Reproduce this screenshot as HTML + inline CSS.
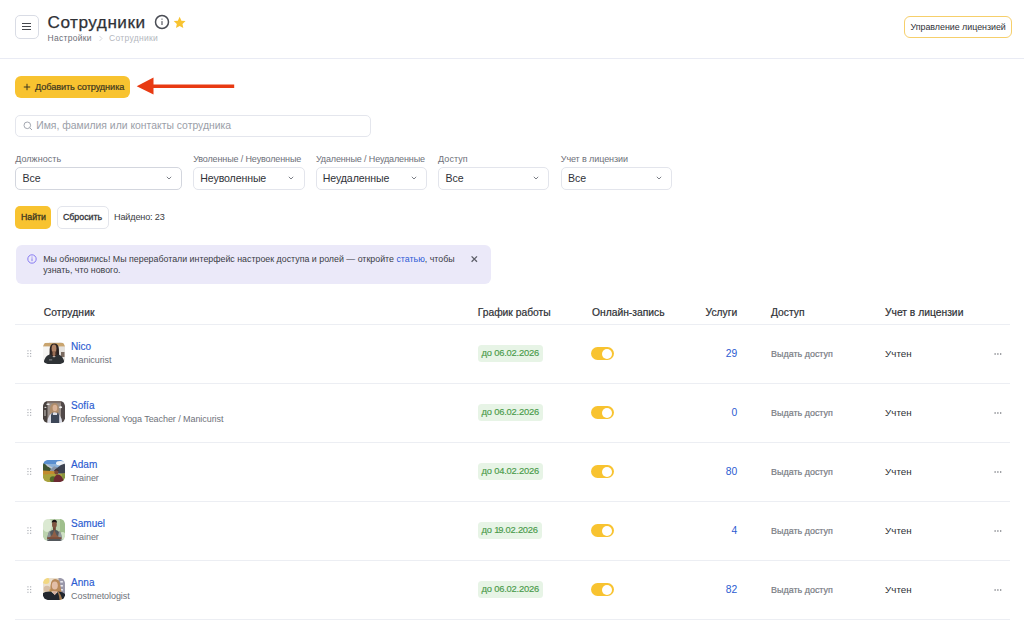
<!DOCTYPE html>
<html><head><meta charset="utf-8">
<style>
*{box-sizing:border-box;margin:0;padding:0}
html,body{width:1024px;height:621px;overflow:hidden;background:#fff}
body{position:relative;font-family:"Liberation Sans",sans-serif;color:#2c2e33}
.a{position:absolute}
.t{position:absolute;line-height:1;white-space:nowrap}
.med{-webkit-text-stroke:0.2px currentColor}
.hl{position:absolute;left:15px;width:995px;height:1px;background:#eceef3}
.sel{position:absolute;top:167px;height:22.5px;border:1px solid #e3e5ec;border-radius:5px;background:#fff}
.sel .v{position:absolute;left:6.5px;top:5px;font-size:10.6px;line-height:1;color:#303238;white-space:nowrap}
.chev{position:absolute;top:8.4px;width:6px;height:4px}
.lbl{font-size:9px;color:#6d7079;top:155px}
</style></head><body>

<!-- header -->
<div class="a" style="left:14.5px;top:14.5px;width:24px;height:24.5px;border:1px solid #d9dce5;border-radius:5px"></div>
<div class="a" style="left:22px;top:23.1px;width:9px;height:1.3px;background:#45474d"></div>
<div class="a" style="left:22px;top:26.1px;width:9px;height:1.3px;background:#45474d"></div>
<div class="a" style="left:22px;top:29.1px;width:9px;height:1.3px;background:#45474d"></div>

<div class="t" style="left:47.5px;top:13.9px;font-size:17.2px;letter-spacing:0.5px;color:#2f3136;-webkit-text-stroke:0.25px #2f3136">Сотрудники</div>
<svg class="a" style="left:154px;top:14px" width="16" height="16" viewBox="0 0 16 16"><circle cx="8" cy="8" r="6.5" fill="none" stroke="#4a4d55" stroke-width="1.5"/><rect x="7.45" y="7.1" width="1.1" height="3.9" fill="#4a4d55"/><circle cx="8" cy="5.1" r="0.7" fill="#4a4d55"/></svg>
<svg class="a" style="left:172.9px;top:15.6px" width="13.3" height="13.3" viewBox="0 0 24 24"><path d="M12 1.5l3.2 6.9 7.5.8-5.6 5.1 1.5 7.4L12 17.9l-6.6 3.8 1.5-7.4L1.3 9.2l7.5-.8z" fill="#f8c330"/></svg>

<div class="t" style="left:47.5px;top:33.8px;font-size:8.5px;letter-spacing:0.3px;color:#6b6e76">Настройки</div>
<svg class="a" style="left:97.5px;top:35px" width="6" height="7" viewBox="0 0 6 7"><path d="M1.5 1l2.5 2.5L1.5 6" fill="none" stroke="#c9ccd3" stroke-width="0.8"/></svg>
<div class="t" style="left:109px;top:33.8px;font-size:8.5px;letter-spacing:0.3px;color:#b4b7be">Сотрудники</div>

<div class="a" style="left:904px;top:16px;width:107.6px;height:21.6px;border:1px solid #f6cf6b;border-radius:6px"></div>
<div class="t" style="left:910.5px;top:22.6px;font-size:8.9px;letter-spacing:-0.02px;color:#303238" >Управление лицензией</div>

<div class="a" style="left:0;top:58px;width:1024px;height:1px;background:#e9ebf4"></div>

<!-- add button -->
<div class="a" style="left:15px;top:76px;width:115px;height:22px;background:#f8c330;border-radius:6px"></div>
<svg class="a" style="left:22.5px;top:83px" width="8" height="8" viewBox="0 0 8 8"><path d="M4 .8v6.4M.8 4h6.4" stroke="#3b3620" stroke-width="1"/></svg>
<div class="t med" style="left:35px;top:83px;font-size:9.2px;letter-spacing:-0.1px;color:#3b3620">Добавить сотрудника</div>

<!-- arrow -->
<svg class="a" style="left:130px;top:70px" width="110" height="30" viewBox="0 0 110 30"><path d="M6.7 16.2L23.5 7.6v6.9H104.2v3.4H23.5v6.5z" fill="#e83a12"/></svg>

<!-- search -->
<div class="a" style="left:15px;top:114.5px;width:355.5px;height:22px;border:1px solid #e4e6ed;border-radius:5px"></div>
<svg class="a" style="left:23px;top:121px" width="10" height="10" viewBox="0 0 10 10"><circle cx="4.3" cy="4.3" r="3.3" fill="none" stroke="#a3a7b0" stroke-width="1"/><path d="M6.7 6.7L9 9" stroke="#a3a7b0" stroke-width="1"/></svg>
<div class="t" style="left:36.2px;top:120.8px;font-size:10.4px;color:#9a9ea8">Имя, фамилия или контакты сотрудника</div>

<!-- filters -->
<div class="t lbl" style="left:15.2px;letter-spacing:0.05px">Должность</div>
<div class="t lbl" style="left:193.2px;letter-spacing:-0.13px">Уволенные / Неуволенные</div>
<div class="t lbl" style="left:315.9px;letter-spacing:-0.13px">Удаленные / Неудаленные</div>
<div class="t lbl" style="left:438.1px;letter-spacing:0.05px">Доступ</div>
<div class="t lbl" style="left:560.8px;letter-spacing:-0.1px">Учет в лицензии</div>

<div class="sel" style="left:15px;width:167px;border-color:#d3d6de"><div class="v">Все</div><svg class="chev" style="left:150px" viewBox="0 0 6 4"><path d="M.8 .8L3 3 5.2 .8" fill="none" stroke="#6d7079" stroke-width="0.9"/></svg></div>
<div class="sel" style="left:193px;width:111.5px"><div class="v" style="left:6.3px;letter-spacing:-0.12px">Неуволенные</div><svg class="chev" style="left:94px" viewBox="0 0 6 4"><path d="M.8 .8L3 3 5.2 .8" fill="none" stroke="#6d7079" stroke-width="0.9"/></svg></div>
<div class="sel" style="left:315.5px;width:111.5px"><div class="v" style="left:6.3px;letter-spacing:-0.12px">Неудаленные</div><svg class="chev" style="left:94px" viewBox="0 0 6 4"><path d="M.8 .8L3 3 5.2 .8" fill="none" stroke="#6d7079" stroke-width="0.9"/></svg></div>
<div class="sel" style="left:438px;width:111px"><div class="v">Все</div><svg class="chev" style="left:94px" viewBox="0 0 6 4"><path d="M.8 .8L3 3 5.2 .8" fill="none" stroke="#6d7079" stroke-width="0.9"/></svg></div>
<div class="sel" style="left:560.5px;width:111px"><div class="v">Все</div><svg class="chev" style="left:94px" viewBox="0 0 6 4"><path d="M.8 .8L3 3 5.2 .8" fill="none" stroke="#6d7079" stroke-width="0.9"/></svg></div>

<!-- find buttons -->
<div class="a" style="left:15px;top:206.2px;width:36px;height:22.4px;background:#f8c330;border-radius:5px"></div>
<div class="t med" style="left:21px;top:212.9px;font-size:8.8px;letter-spacing:-0.03px;color:#3b3620;-webkit-text-stroke:0.3px #3b3620">Найти</div>
<div class="a" style="left:57px;top:206.2px;width:51.5px;height:22.4px;border:1px solid #e3e5ec;border-radius:5px"></div>
<div class="t" style="left:62.9px;top:212.9px;font-size:8.85px;color:#34363c;-webkit-text-stroke:0.3px #34363c">Сбросить</div>
<div class="t" style="left:114px;top:213px;font-size:9.1px;letter-spacing:-0.15px;color:#3a3c42">Найдено: 23</div>

<!-- banner -->
<div class="a" style="left:15.5px;top:245px;width:475.5px;height:39px;background:#ebe9f9;border-radius:6px"></div>
<svg class="a" style="left:26.5px;top:254px" width="10" height="10" viewBox="0 0 10 10"><circle cx="5" cy="5" r="4.2" fill="none" stroke="#7d6ff0" stroke-width="0.9"/><rect x="4.55" y="4.3" width="0.9" height="2.8" fill="#7d6ff0"/><circle cx="5" cy="3" r="0.55" fill="#7d6ff0"/></svg>
<div class="t" style="left:43.2px;top:254.7px;font-size:8.85px;color:#3a3c44">Мы обновились! Мы переработали интерфейс настроек доступа и ролей — откройте <span style="color:#2f5bd6">статью</span>, чтобы</div>
<div class="t" style="left:43.2px;top:265.6px;font-size:8.85px;color:#3a3c44">узнать, что нового.</div>
<svg class="a" style="left:470px;top:255px" width="8" height="8" viewBox="0 0 8 8"><path d="M1.6 1.4l5.4 5.4M7 1.4L1.6 6.8" stroke="#5c5e68" stroke-width="1.3"/></svg>

<!-- table header -->
<div class="t med" style="left:43.7px;top:307.7px;font-size:10.3px;letter-spacing:0.1px;color:#2e3035">Сотрудник</div>
<div class="t med" style="left:477.7px;top:307.7px;font-size:10.3px;color:#2e3035">График работы</div>
<div class="t med" style="left:592px;top:307.7px;font-size:10.3px;color:#2e3035">Онлайн-запись</div>
<div class="t med" style="left:705.6px;top:307.7px;font-size:10.3px;color:#2e3035">Услуги</div>
<div class="t med" style="left:771px;top:307.7px;font-size:10.3px;color:#2e3035">Доступ</div>
<div class="t med" style="left:885px;top:307.7px;font-size:10.3px;color:#2e3035">Учет в лицензии</div>
<div class="hl" style="top:323.5px;height:1.2px"></div>

<div id="rows"></div>

<div class="a" style="left:26.8px;top:350.10px;width:5px;height:8px">
<svg width="5" height="8" viewBox="0 0 5 8" style="display:block"><g fill="#a4a7ae"><rect x="0.4" y="0.3" width="1.1" height="1.1"/><rect x="3.1" y="0.3" width="1.1" height="1.1"/><rect x="0.4" y="3" width="1.1" height="1.1"/><rect x="3.1" y="3" width="1.1" height="1.1"/><rect x="0.4" y="5.7" width="1.1" height="1.1"/><rect x="3.1" y="5.7" width="1.1" height="1.1"/></g></svg></div>
<svg class="a" style="left:43.1px;top:342.20px;border-radius:4.5px" width="22" height="22" viewBox="0 0 22 22"><defs><clipPath id="c0"><rect width="22" height="22" rx="4.8"/></clipPath><filter id="f0" x="-10%" y="-10%" width="120%" height="120%"><feGaussianBlur stdDeviation="0.35"/></filter></defs><g clip-path="url(#c0)"><g filter="url(#f0)"><rect width="22" height="22" fill="#ebe8e4"/><rect x="0" y="0" width="6" height="22" fill="#f6f5f3"/><rect x="16" y="0" width="6" height="22" fill="#e4e1dd"/><rect x="0" y="1" width="22" height="3.4" fill="#c9a46e"/><rect x="18" y="10" width="3.5" height="5" fill="#7a6a60"/><path d="M6.4 20L6.7 7Q7 1.4 11.2 1.4Q15.8 1.4 15.9 7L16.3 20.5H13.4L13.1 10H9.4L9.1 20z" fill="#2c2320"/><rect x="8.5" y="8" width="5.5" height="6" fill="#3a2c26"/><ellipse cx="11" cy="6.4" rx="2.4" ry="3.8" fill="#b08468"/><path d="M9.6 9H12.4V12.5L11 15.2L9.6 12.5z" fill="#9a6e56"/><path d="M0.5 22Q1 13.6 7.2 12.2L11 15.6L14.8 12.2Q21 13.6 21.6 22z" fill="#2e3035"/><rect x="6" y="17.4" width="3.2" height="1" fill="#8a8c92"/></g></g></svg>
<div class="t" style="left:71.1px;top:341.54px;font-size:10px;color:#2b5bd1;-webkit-text-stroke:0.15px #2b5bd1">Nico</div>
<div class="t" style="left:71.1px;top:356.18px;font-size:9px;letter-spacing:-0.07px;color:#6f727a">Manicurist</div>
<div class="a" style="left:477.7px;top:345.20px;height:16.5px;line-height:16.5px;padding:0 3.9px;white-space:nowrap;background:#e7f4e6;border-radius:3.5px;font-size:9.4px;letter-spacing:-0.22px;color:#4a9b4b;-webkit-text-stroke:0.15px #4a9b4b">до 06.02.2026</div>
<div class="a" style="left:591.3px;top:347.30px;width:22.6px;height:12.5px;background:#f8c330;border-radius:7px"></div>
<div class="a" style="left:602.2px;top:348.50px;width:10.2px;height:10.2px;background:#fff;border-radius:50%"></div>
<div class="t" style="right:286.79999999999995px;top:348.68px;font-size:10.3px;color:#2b5bd1">29</div>
<div class="t med" style="left:771.1px;top:349.82px;font-size:8.95px;color:#787b83">Выдать доступ</div>
<div class="t" style="left:885.1px;top:349.10px;font-size:9.8px;color:#2e3035">Учтен</div>
<svg class="a" style="left:993.5px;top:352.70px" width="8" height="2" viewBox="0 0 8 2"><g fill="#5e6168"><circle cx="1.1" cy="1" r="0.72"/><circle cx="3.9" cy="1" r="0.72"/><circle cx="6.7" cy="1" r="0.72"/></g></svg>
<div class="hl" style="top:383.10px;height:1.2px"></div>
<div class="a" style="left:26.8px;top:409.10px;width:5px;height:8px">
<svg width="5" height="8" viewBox="0 0 5 8" style="display:block"><g fill="#a4a7ae"><rect x="0.4" y="0.3" width="1.1" height="1.1"/><rect x="3.1" y="0.3" width="1.1" height="1.1"/><rect x="0.4" y="3" width="1.1" height="1.1"/><rect x="3.1" y="3" width="1.1" height="1.1"/><rect x="0.4" y="5.7" width="1.1" height="1.1"/><rect x="3.1" y="5.7" width="1.1" height="1.1"/></g></svg></div>
<svg class="a" style="left:43.1px;top:401.20px;border-radius:4.5px" width="22" height="22" viewBox="0 0 22 22"><defs><clipPath id="c1"><rect width="22" height="22" rx="4.8"/></clipPath><filter id="f1" x="-10%" y="-10%" width="120%" height="120%"><feGaussianBlur stdDeviation="0.35"/></filter></defs><g clip-path="url(#c1)"><g filter="url(#f1)"><rect width="22" height="22" fill="#9b908a"/><rect x="0" y="0" width="4.5" height="22" fill="#46403e"/><rect x="1" y="9" width="2" height="6" fill="#8a8480"/><rect x="18" y="0" width="4" height="22" fill="#514a48"/><rect x="4.5" y="0" width="13.5" height="2.2" fill="#7e706a"/><ellipse cx="5" cy="3.3" rx="1.8" ry="0.8" fill="#eeeeee"/><ellipse cx="2.4" cy="6.3" rx="1.1" ry="0.6" fill="#dedede"/><ellipse cx="17.6" cy="6.3" rx="1.5" ry="1" fill="#f4f4f4"/><path d="M6.8 13Q6.3 2 11.6 2Q15.8 2 15.7 9L15.3 12.5z" fill="#b08d6a"/><ellipse cx="11.9" cy="7" rx="2.3" ry="3.3" fill="#dab296"/><path d="M4.3 22Q4.8 11.8 11.6 11.2Q18.4 11.8 19.2 22z" fill="#dcdde6"/><path d="M8 22V14.2L9 11.6H9.6L10 14H14L14.4 11.6H15L16.2 14.2V22z" fill="#3d4759"/></g></g></svg>
<div class="t" style="left:71.1px;top:400.54px;font-size:10px;color:#2b5bd1;-webkit-text-stroke:0.15px #2b5bd1">Sofía</div>
<div class="t" style="left:71.1px;top:415.18px;font-size:9px;letter-spacing:-0.07px;color:#6f727a">Professional Yoga Teacher / Manicurist</div>
<div class="a" style="left:477.7px;top:404.20px;height:16.5px;line-height:16.5px;padding:0 3.9px;white-space:nowrap;background:#e7f4e6;border-radius:3.5px;font-size:9.4px;letter-spacing:-0.22px;color:#4a9b4b;-webkit-text-stroke:0.15px #4a9b4b">до 06.02.2026</div>
<div class="a" style="left:591.3px;top:406.30px;width:22.6px;height:12.5px;background:#f8c330;border-radius:7px"></div>
<div class="a" style="left:602.2px;top:407.50px;width:10.2px;height:10.2px;background:#fff;border-radius:50%"></div>
<div class="t" style="right:286.79999999999995px;top:407.68px;font-size:10.3px;color:#2b5bd1">0</div>
<div class="t med" style="left:771.1px;top:408.82px;font-size:8.95px;color:#787b83">Выдать доступ</div>
<div class="t" style="left:885.1px;top:408.10px;font-size:9.8px;color:#2e3035">Учтен</div>
<svg class="a" style="left:993.5px;top:411.70px" width="8" height="2" viewBox="0 0 8 2"><g fill="#5e6168"><circle cx="1.1" cy="1" r="0.72"/><circle cx="3.9" cy="1" r="0.72"/><circle cx="6.7" cy="1" r="0.72"/></g></svg>
<div class="hl" style="top:442.10px;height:1.2px"></div>
<div class="a" style="left:26.8px;top:468.10px;width:5px;height:8px">
<svg width="5" height="8" viewBox="0 0 5 8" style="display:block"><g fill="#a4a7ae"><rect x="0.4" y="0.3" width="1.1" height="1.1"/><rect x="3.1" y="0.3" width="1.1" height="1.1"/><rect x="0.4" y="3" width="1.1" height="1.1"/><rect x="3.1" y="3" width="1.1" height="1.1"/><rect x="0.4" y="5.7" width="1.1" height="1.1"/><rect x="3.1" y="5.7" width="1.1" height="1.1"/></g></svg></div>
<svg class="a" style="left:43.1px;top:460.20px;border-radius:4.5px" width="22" height="22" viewBox="0 0 22 22"><defs><clipPath id="c2"><rect width="22" height="22" rx="4.8"/></clipPath><filter id="f2" x="-10%" y="-10%" width="120%" height="120%"><feGaussianBlur stdDeviation="0.35"/></filter></defs><g clip-path="url(#c2)"><g filter="url(#f2)"><rect width="22" height="22" fill="#5a8fd0"/><rect x="0" y="4" width="22" height="6" fill="#8cb2da"/><ellipse cx="17.5" cy="3.2" rx="4.5" ry="2.2" fill="#eef2f6"/><path d="M0 3L5 6L10 11L0 12.5z" fill="#3e5232"/><path d="M2.5 3.5L9 7.3L10.3 9.3L4 6.2z" fill="#c3c7cc"/><path d="M7 10L11 6.2L14 7.2L17 10.5L7 11.5z" fill="#8894a6"/><path d="M12 9.5L18 5L22 3.5V14.5L13 12.5z" fill="#3c4250"/><path d="M0 10.5L12 11.2L14 14.2L0 15.5z" fill="#c28b2e"/><path d="M0 14.5L22 13.2V22H0z" fill="#a9a23e"/><ellipse cx="10" cy="19.3" rx="3.2" ry="3" fill="#51692a"/><rect x="19" y="14" width="3" height="8" fill="#869640"/><ellipse cx="13.4" cy="12.3" rx="2" ry="2.3" fill="#7a4a38"/><path d="M11.2 11.4Q13.4 9 15.6 11.2L15.3 10Q13.4 8.8 11.4 10z" fill="#3a2420"/><path d="M10.5 22Q11 15.2 14.6 14.6Q19.5 14.8 20.6 22z" fill="#6c2b33"/></g></g></svg>
<div class="t" style="left:71.1px;top:459.54px;font-size:10px;color:#2b5bd1;-webkit-text-stroke:0.15px #2b5bd1">Adam</div>
<div class="t" style="left:71.1px;top:474.18px;font-size:9px;letter-spacing:-0.07px;color:#6f727a">Trainer</div>
<div class="a" style="left:477.7px;top:463.20px;height:16.5px;line-height:16.5px;padding:0 3.9px;white-space:nowrap;background:#e7f4e6;border-radius:3.5px;font-size:9.4px;letter-spacing:-0.22px;color:#4a9b4b;-webkit-text-stroke:0.15px #4a9b4b">до 04.02.2026</div>
<div class="a" style="left:591.3px;top:465.30px;width:22.6px;height:12.5px;background:#f8c330;border-radius:7px"></div>
<div class="a" style="left:602.2px;top:466.50px;width:10.2px;height:10.2px;background:#fff;border-radius:50%"></div>
<div class="t" style="right:286.79999999999995px;top:466.68px;font-size:10.3px;color:#2b5bd1">80</div>
<div class="t med" style="left:771.1px;top:467.82px;font-size:8.95px;color:#787b83">Выдать доступ</div>
<div class="t" style="left:885.1px;top:467.10px;font-size:9.8px;color:#2e3035">Учтен</div>
<svg class="a" style="left:993.5px;top:470.70px" width="8" height="2" viewBox="0 0 8 2"><g fill="#5e6168"><circle cx="1.1" cy="1" r="0.72"/><circle cx="3.9" cy="1" r="0.72"/><circle cx="6.7" cy="1" r="0.72"/></g></svg>
<div class="hl" style="top:501.10px;height:1.2px"></div>
<div class="a" style="left:26.8px;top:527.10px;width:5px;height:8px">
<svg width="5" height="8" viewBox="0 0 5 8" style="display:block"><g fill="#a4a7ae"><rect x="0.4" y="0.3" width="1.1" height="1.1"/><rect x="3.1" y="0.3" width="1.1" height="1.1"/><rect x="0.4" y="3" width="1.1" height="1.1"/><rect x="3.1" y="3" width="1.1" height="1.1"/><rect x="0.4" y="5.7" width="1.1" height="1.1"/><rect x="3.1" y="5.7" width="1.1" height="1.1"/></g></svg></div>
<svg class="a" style="left:43.1px;top:519.20px;border-radius:4.5px" width="22" height="22" viewBox="0 0 22 22"><defs><clipPath id="c3"><rect width="22" height="22" rx="4.8"/></clipPath><filter id="f3" x="-10%" y="-10%" width="120%" height="120%"><feGaussianBlur stdDeviation="0.35"/></filter></defs><g clip-path="url(#c3)"><g filter="url(#f3)"><rect width="22" height="22" fill="#bcd3ae"/><ellipse cx="4" cy="6" rx="5" ry="7" fill="#dbe9d2"/><rect x="17" y="0" width="5" height="22" fill="#9fbf8c"/><ellipse cx="19.5" cy="17" rx="3" ry="4" fill="#cfe2c4"/><path d="M4 22Q4.5 11.2 11.3 10.6Q18.2 11.2 19.4 22z" fill="#52585c"/><path d="M4.2 22Q4.6 13 6.8 11.8L8 18z" fill="#8e9498"/><path d="M19.2 22Q18.8 13 16.2 11.8L15 18z" fill="#969c9e"/><rect x="10" y="8" width="2.8" height="3.2" fill="#6e4a38"/><ellipse cx="11.4" cy="5.6" rx="2.4" ry="3.3" fill="#7e5640"/><path d="M8.8 3.8Q8.8 0.8 11.4 0.8Q14 0.8 14 3.8Q11.4 2.4 8.8 3.8z" fill="#1a1614"/><path d="M11.4 10.8L9.4 15.8L6.4 18.4L5.4 19.6H17.4L16.4 18.4L13.4 15.8z" fill="#8e5e46"/><path d="M4.2 18.2H18.4V20H4.2z" fill="#7a4e3a"/></g></g></svg>
<div class="t" style="left:71.1px;top:518.53px;font-size:10px;color:#2b5bd1;-webkit-text-stroke:0.15px #2b5bd1">Samuel</div>
<div class="t" style="left:71.1px;top:533.18px;font-size:9px;letter-spacing:-0.07px;color:#6f727a">Trainer</div>
<div class="a" style="left:477.7px;top:522.20px;height:16.5px;line-height:16.5px;padding:0 3.9px;white-space:nowrap;background:#e7f4e6;border-radius:3.5px;font-size:9.4px;letter-spacing:-0.22px;color:#4a9b4b;-webkit-text-stroke:0.15px #4a9b4b">до <span style="margin-right:-1.1px">1</span>9.02.2026</div>
<div class="a" style="left:591.3px;top:524.30px;width:22.6px;height:12.5px;background:#f8c330;border-radius:7px"></div>
<div class="a" style="left:602.2px;top:525.50px;width:10.2px;height:10.2px;background:#fff;border-radius:50%"></div>
<div class="t" style="right:286.79999999999995px;top:525.68px;font-size:10.3px;color:#2b5bd1">4</div>
<div class="t med" style="left:771.1px;top:526.82px;font-size:8.95px;color:#787b83">Выдать доступ</div>
<div class="t" style="left:885.1px;top:526.10px;font-size:9.8px;color:#2e3035">Учтен</div>
<svg class="a" style="left:993.5px;top:529.70px" width="8" height="2" viewBox="0 0 8 2"><g fill="#5e6168"><circle cx="1.1" cy="1" r="0.72"/><circle cx="3.9" cy="1" r="0.72"/><circle cx="6.7" cy="1" r="0.72"/></g></svg>
<div class="hl" style="top:560.10px;height:1.2px"></div>
<div class="a" style="left:26.8px;top:586.10px;width:5px;height:8px">
<svg width="5" height="8" viewBox="0 0 5 8" style="display:block"><g fill="#a4a7ae"><rect x="0.4" y="0.3" width="1.1" height="1.1"/><rect x="3.1" y="0.3" width="1.1" height="1.1"/><rect x="0.4" y="3" width="1.1" height="1.1"/><rect x="3.1" y="3" width="1.1" height="1.1"/><rect x="0.4" y="5.7" width="1.1" height="1.1"/><rect x="3.1" y="5.7" width="1.1" height="1.1"/></g></svg></div>
<svg class="a" style="left:43.1px;top:578.20px;border-radius:4.5px" width="22" height="22" viewBox="0 0 22 22"><defs><clipPath id="c4"><rect width="22" height="22" rx="4.8"/></clipPath><filter id="f4" x="-10%" y="-10%" width="120%" height="120%"><feGaussianBlur stdDeviation="0.35"/></filter></defs><g clip-path="url(#c4)"><g filter="url(#f4)"><rect width="22" height="22" fill="#ebe0cf"/><ellipse cx="3" cy="2.8" rx="3.4" ry="3.2" fill="#f2d882"/><rect x="15.5" y="0" width="6.5" height="16" fill="#9a98aa"/><rect x="17.3" y="3" width="2.6" height="1.6" fill="#e8e8ee"/><rect x="17.3" y="7" width="2.6" height="1.6" fill="#e8e8ee"/><rect x="17.3" y="11" width="2.6" height="1.6" fill="#e8e8ee"/><ellipse cx="4" cy="11" rx="3.3" ry="3.2" fill="#d6bea6"/><ellipse cx="7.8" cy="12.4" rx="1.6" ry="1.4" fill="#dcab4c"/><path d="M7.4 13Q6.8 1 12 1Q17 1 17.2 7L18.5 14L15 14z" fill="#b8895a"/><ellipse cx="11.8" cy="7.6" rx="3" ry="4" fill="#e2bea8"/><path d="M0 22V15.2Q2 13.4 8 13.6L11.7 16.8L15.4 13.6Q20 13.8 22 16V22z" fill="#22262e"/><path d="M9.2 13.2L14.3 13.2L11.7 17.2z" fill="#d6ae9e"/><path d="M15.5 13.4Q18.4 17 19.6 22H16.6Q16.2 17.4 14.8 14.2z" fill="#a47a50"/></g></g></svg>
<div class="t" style="left:71.1px;top:577.53px;font-size:10px;color:#2b5bd1;-webkit-text-stroke:0.15px #2b5bd1">Anna</div>
<div class="t" style="left:71.1px;top:592.18px;font-size:9px;letter-spacing:-0.07px;color:#6f727a">Costmetologist</div>
<div class="a" style="left:477.7px;top:581.20px;height:16.5px;line-height:16.5px;padding:0 3.9px;white-space:nowrap;background:#e7f4e6;border-radius:3.5px;font-size:9.4px;letter-spacing:-0.22px;color:#4a9b4b;-webkit-text-stroke:0.15px #4a9b4b">до 06.02.2026</div>
<div class="a" style="left:591.3px;top:583.30px;width:22.6px;height:12.5px;background:#f8c330;border-radius:7px"></div>
<div class="a" style="left:602.2px;top:584.50px;width:10.2px;height:10.2px;background:#fff;border-radius:50%"></div>
<div class="t" style="right:286.79999999999995px;top:584.68px;font-size:10.3px;color:#2b5bd1">82</div>
<div class="t med" style="left:771.1px;top:585.82px;font-size:8.95px;color:#787b83">Выдать доступ</div>
<div class="t" style="left:885.1px;top:585.10px;font-size:9.8px;color:#2e3035">Учтен</div>
<svg class="a" style="left:993.5px;top:588.70px" width="8" height="2" viewBox="0 0 8 2"><g fill="#5e6168"><circle cx="1.1" cy="1" r="0.72"/><circle cx="3.9" cy="1" r="0.72"/><circle cx="6.7" cy="1" r="0.72"/></g></svg>
<div class="hl" style="top:619.10px;height:1.2px"></div>
</body></html>
